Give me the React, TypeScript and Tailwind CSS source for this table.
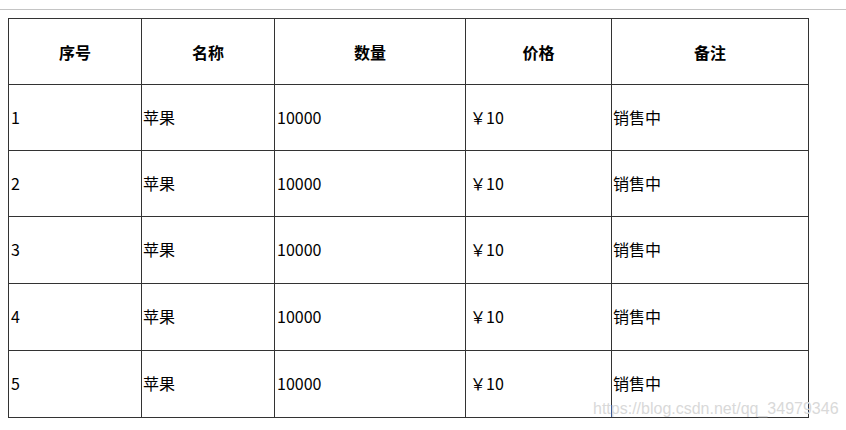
import React from 'react';

const HEADERS = [
    { name: '序号', width: 'w-[133px]' },
    { name: '名称', width: 'w-[133px]' },
    { name: '数量', width: 'w-[191px]' },
    { name: '价格', width: 'w-[146px]' },
    { name: '备注', width: 'w-[197px]' },
];

const ROWS = [1, 2, 3, 4, 5].map((id) => ({
    id,
    name: '苹果',
    count: '10000',
    price: '￥10',
    note: '销售中',
}));

const App: React.FC = () => {
    return (
        <div className="relative w-[846px] h-[430px] bg-white text-black font-['Noto_Sans_CJK_SC','Noto_Sans',sans-serif] text-[16px]">
            <div className="pt-[9px]">
                <div className="h-px bg-[#c4c4c4]"></div>
            </div>
            <table className="ml-[8px] mt-[8px] border-collapse border border-[#333] table-fixed w-[800px]">
                <thead>
                    <tr className="h-[66px]">
                        {HEADERS.map((h) => (
                            <th key={h.name} className={`${h.width} border border-[#333] p-0 text-center font-bold`}>
                                {h.name}
                            </th>
                        ))}
                    </tr>
                </thead>
                <tbody>
                    {ROWS.map((r) => (
                        <tr key={r.id} className={r.id <= 2 ? 'h-[66px]' : 'h-[67px]'}>
                            <td className="border border-[#333] p-0 pl-[2px] pb-[2px] align-middle">{r.id}</td>
                            <td className="border border-[#333] p-0 pl-px pb-[2px] align-middle">{r.name}</td>
                            <td className="border border-[#333] p-0 pl-[2px] pb-[2px] align-middle">{r.count}</td>
                            <td className="border border-[#333] p-0 pl-[4px] pb-[2px] align-middle">{r.price}</td>
                            <td className="border border-[#333] p-0 pl-px pb-[2px] align-middle">{r.note}</td>
                        </tr>
                    ))}
                </tbody>
            </table>
            <div className="absolute left-[593px] top-[401px] text-[16px] text-[#d9d9d9] font-['Liberation_Sans',sans-serif] leading-none whitespace-nowrap">
                https://blog.csdn.net/qq_34979346
            </div>
        </div>
    );
};

export default App;
